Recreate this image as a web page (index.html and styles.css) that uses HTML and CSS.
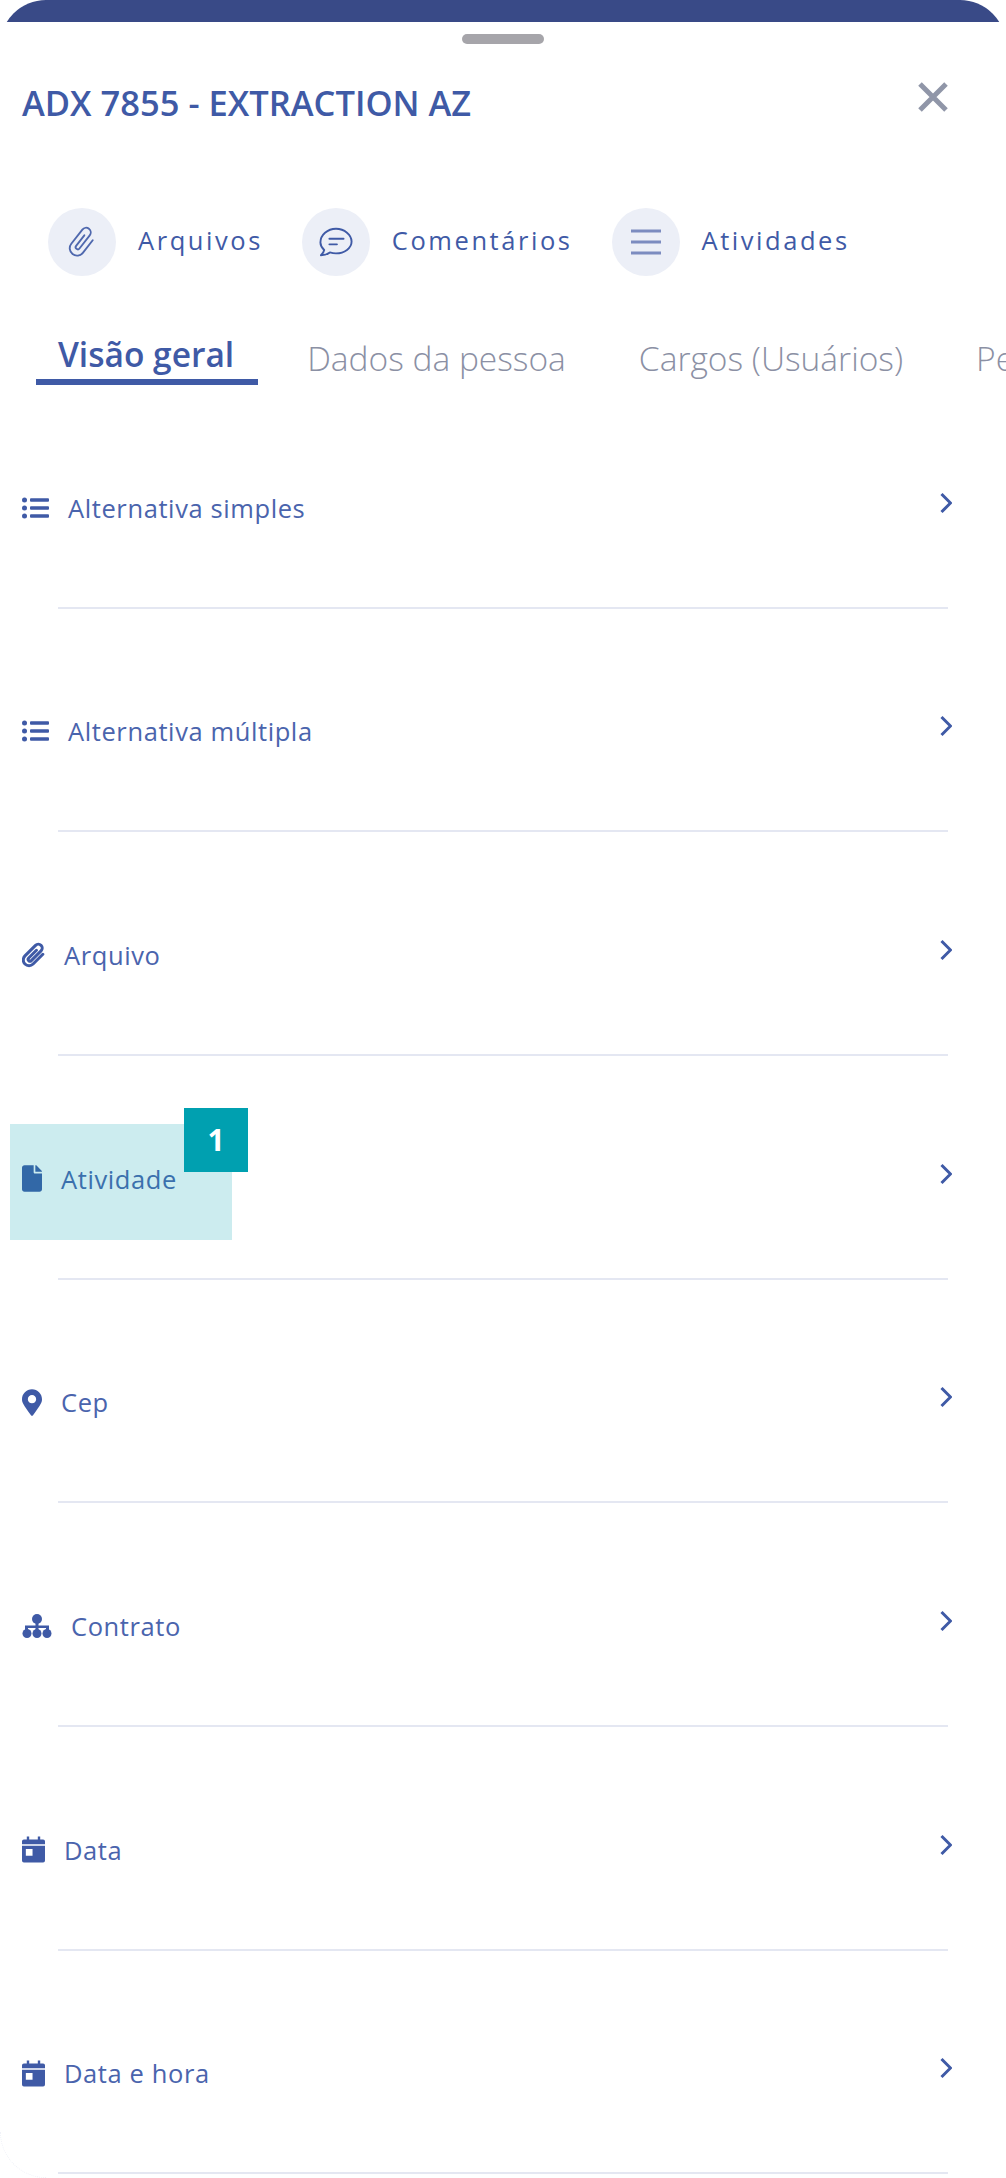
FILE: index.html
```html
<!DOCTYPE html>
<html lang="pt-BR">
<head>
    <meta charset="UTF-8">
    <meta name="viewport" content="width=device-width, initial-scale=1.0">
    <title>ADX 7855 - EXTRACTION AZ</title>
    <link rel="stylesheet" href="styles.css">
</head>
<body>
    <div class="top-band"></div>

    <div class="sheet">
        <div class="handle"></div>

        <div class="sheet-header">
            <h1>ADX 7855 - EXTRACTION AZ</h1>
            <svg class="close-icon" viewBox="0 0 30 30"><path d="M2 2l26 26M28 2L2 28"/></svg>
        </div>

        <div class="actions">
            <div class="action">
                <span class="action-circle">
                    <svg class="action-icon action-icon-clip" viewBox="0 0 24 24"><path transform="rotate(38 12 12)" d="M17.500 6v12a5.500 5.500 0 0 1-11 0V4.500a3.500 3.500 0 0 1 7 0v12.500a1.600 1.600 0 0 1-3.200 0V7"/></svg>
                </span>
                <span class="action-label">Arquivos</span>
            </div>
            <div class="action">
                <span class="action-circle">
                    <svg class="action-icon" viewBox="0 0 36 32"><path d="M2 30c2-1.500 3-3 3.500-5.500C3 22 1.500 19.500 1.500 16.500 1.500 8.500 9 2 18 2s16.500 6.500 16.500 13.500S27 28 18 28c-2.500 0-4.500-.4-6.500-1-2.500 2-5.500 3-9.500 3z"/><path d="M11 12.500h15M11 18.500h8"/></svg>
                </span>
                <span class="action-label">Comentários</span>
            </div>
            <div class="action">
                <span class="action-circle">
                    <svg class="action-icon action-icon-menu" viewBox="0 0 30 26"><path d="M0 2h30M0 13h30M0 24h30"/></svg>
                </span>
                <span class="action-label">Atividades</span>
            </div>
        </div>

        <div class="tabs">
            <div class="tab tab-active">Visão geral</div>
            <div class="tab">Dados da pessoa</div>
            <div class="tab">Cargos (Usuários)</div>
            <div class="tab">Pessoas</div>
        </div>

        <div class="field-list">
            <div class="field">
                <svg class="field-icon icon-list" viewBox="0 0 27 22"><circle cx="2.500" cy="3" r="2.500"/><circle cx="2.500" cy="11" r="2.500"/><circle cx="2.500" cy="19" r="2.500"/><rect x="8" y="1.300" width="19" height="3.400" rx="1"/><rect x="8" y="9.300" width="19" height="3.400" rx="1"/><rect x="8" y="17.300" width="19" height="3.400" rx="1"/></svg>
                <span class="field-label">Alternativa simples</span>
                <svg class="chevron" viewBox="0 0 12 22"><path d="M1.500 2l9 9-9 9"/></svg>
            </div>
            <div class="field">
                <svg class="field-icon icon-list" viewBox="0 0 27 22"><circle cx="2.500" cy="3" r="2.500"/><circle cx="2.500" cy="11" r="2.500"/><circle cx="2.500" cy="19" r="2.500"/><rect x="8" y="1.300" width="19" height="3.400" rx="1"/><rect x="8" y="9.300" width="19" height="3.400" rx="1"/><rect x="8" y="17.300" width="19" height="3.400" rx="1"/></svg>
                <span class="field-label">Alternativa múltipla</span>
                <svg class="chevron" viewBox="0 0 12 22"><path d="M1.500 2l9 9-9 9"/></svg>
            </div>
            <div class="field">
                <svg class="field-icon icon-clip" viewBox="2 2 20 20"><path transform="rotate(45 12 12)" d="M17 5.500v12a5 5 0 0 1-10 0V4.500a3.400 3.400 0 0 1 6.800 0v12a1.600 1.600 0 0 1-3.200 0V7"/></svg>
                <span class="field-label">Arquivo</span>
                <svg class="chevron" viewBox="0 0 12 22"><path d="M1.500 2l9 9-9 9"/></svg>
            </div>
            <div class="field">
                <svg class="field-icon icon-file" viewBox="0 0 384 512"><path d="M224 136V0H48C21.500 0 0 21.500 0 48v416c0 26.500 21.500 48 48 48h288c26.500 0 48-21.500 48-48V160H248c-13.200 0-24-10.800-24-24zm160-14.100v6.100H256V0h6.100c6.400 0 12.500 2.500 17 7l97.900 98c4.500 4.500 7 10.600 7 16.900z"/></svg>
                <span class="field-label">Atividade</span>
                <svg class="chevron" viewBox="0 0 12 22"><path d="M1.500 2l9 9-9 9"/></svg>
                <div class="highlight"></div>
                <div class="badge">1</div>
            </div>
            <div class="field">
                <svg class="field-icon icon-marker" viewBox="0 0 384 512"><path d="M172.268 501.670C26.970 291.031 0 262.429 0 192 0 85.961 85.961 0 192 0s192 85.961 192 192c0 70.429-26.970 99.031-172.268 309.670-9.535 13.774-29.930 13.773-39.464 0zM192 272c44.183 0 80-35.817 80-80s-35.817-80-80-80-80 35.817-80 80 35.817 80 80 80z"/></svg>
                <span class="field-label">Cep</span>
                <svg class="chevron" viewBox="0 0 12 22"><path d="M1.500 2l9 9-9 9"/></svg>
            </div>
            <div class="field">
                <svg class="field-icon icon-sitemap" viewBox="0 0 30 24"><circle cx="15" cy="5" r="5"/><circle cx="5" cy="19.500" r="4.500"/><circle cx="15" cy="19.500" r="4.500"/><circle cx="25" cy="19.500" r="4.500"/><path d="M13.500 8h3v3.500H27v6h-3v-3.500H16.500v3.500h-3V14H6v3.500H3v-6h10.500z"/></svg>
                <span class="field-label">Contrato</span>
                <svg class="chevron" viewBox="0 0 12 22"><path d="M1.500 2l9 9-9 9"/></svg>
            </div>
            <div class="field">
                <svg class="field-icon icon-calendar" viewBox="0 0 24 27"><path fill-rule="evenodd" d="M5 0h2.500v3h9V0H19v3h3a2 2 0 0 1 2 2v3H0V5a2 2 0 0 1 2-2h3zM0 9.500h24V25a2 2 0 0 1-2 2H2a2 2 0 0 1-2-2zM4 13v7h7v-7z"/></svg>
                <span class="field-label">Data</span>
                <svg class="chevron" viewBox="0 0 12 22"><path d="M1.500 2l9 9-9 9"/></svg>
            </div>
            <div class="field">
                <svg class="field-icon icon-calendar" viewBox="0 0 24 27"><path fill-rule="evenodd" d="M5 0h2.500v3h9V0H19v3h3a2 2 0 0 1 2 2v3H0V5a2 2 0 0 1 2-2h3zM0 9.500h24V25a2 2 0 0 1-2 2H2a2 2 0 0 1-2-2zM4 13v7h7v-7z"/></svg>
                <span class="field-label">Data e hora</span>
                <svg class="chevron" viewBox="0 0 12 22"><path d="M1.500 2l9 9-9 9"/></svg>
            </div>
        </div>
    </div>
</body>
</html>
```

FILE: styles.css
```css
html, body {
    margin: 0;
    padding: 0;
    height: 2178px;
    overflow: hidden;
    background-color: #fff;
}

body {
    font-family: 'Open Sans', sans-serif;
    color: #3f5aa6;
}

.top-band {
    height: 22px;
    overflow: hidden;
}

.top-band::before {
    content: "";
    display: block;
    height: 92px;
    background-color: #394a87;
    border-radius: 46px 46px 0 0;
}

.sheet {
    position: relative;
    height: 2156px;
    background-color: #fff;
}

/* canto arredondado bem fraco que aparece embaixo */
.sheet::after {
    content: "";
    position: absolute;
    left: 0;
    bottom: 0;
    width: 46px;
    height: 46px;
    box-sizing: border-box;
    border-left: 1px dotted #f0f2f8;
    border-bottom: 1px dotted #f0f2f8;
    border-bottom-left-radius: 46px;
}

.handle {
    width: 82px;
    height: 10px;
    margin: 0 auto;
    position: relative;
    top: 12px;
    background-color: #a6a5aa;
    border-radius: 5px;
}

.sheet-header {
    display: flex;
    justify-content: space-between;
    align-items: flex-start;
    padding: 50px 58px 0 22px;
}

h1 {
    margin: 0;
    font-size: 34.5px;
    font-weight: 600;
    line-height: 41px;
    color: #3f5aa6;
}

.close-icon {
    width: 30px;
    height: 30px;
    fill: none;
    stroke: #9096a8;
    stroke-width: 5;
}

.actions {
    display: flex;
    align-items: center;
    margin-top: 85px;
    padding-left: 48px;
}

.action {
    display: flex;
    align-items: center;
    gap: 22px;
    margin-right: 39px;
}

.action-circle {
    display: flex;
    align-items: center;
    justify-content: center;
    width: 68px;
    height: 68px;
    border-radius: 50%;
    background-color: #eceff7;
}

.action-icon {
    width: 34px;
    height: 32px;
    fill: none;
    stroke: #3f5aa6;
    stroke-width: 2;
    stroke-linecap: round;
    stroke-linejoin: round;
}

.action-icon-clip {
    stroke: #4f68ae;
    stroke-width: 1.400;
}

.action-icon-menu {
    width: 30px;
    height: 26px;
    stroke: #7c8cc0;
    stroke-width: 3;
    stroke-linecap: butt;
}

.action-label {
    margin-bottom: 4px;
    font-size: 25.5px;
    letter-spacing: 2.55px;
    color: #3f5aa6;
}

.tabs {
    display: flex;
    align-items: flex-end;
    gap: 29px;
    margin-top: 55px;
    margin-left: 36px;
    white-space: nowrap;
}

.tab {
    padding: 0 22px 4px;
    font-size: 33.5px;
    font-weight: 300;
    line-height: 46px;
    color: #8b90a4;
}

.tab-active {
    padding-right: 24px;
    padding-bottom: 2px;
    margin-right: -2px;
    font-weight: 600;
    color: #3f5aa6;
    border-bottom: 6px solid #3f5aa6;
}

.field {
    position: relative;
    display: flex;
    align-items: center;
    gap: 19px;
    height: 223.67px;
    box-sizing: border-box;
    padding: 22px 54px 0 22px;
}

.field::after {
    content: "";
    position: absolute;
    left: 58px;
    right: 58px;
    bottom: 0;
    height: 2px;
    background-color: #e4e7f2;
}

.field-icon {
    flex: none;
    fill: #3f5aa6;
}

.icon-list {
    width: 27px;
    height: 22px;
}

.icon-clip {
    width: 23px;
    height: 27px;
    fill: none;
    stroke: #3f5aa6;
    stroke-width: 2.600;
    stroke-linecap: round;
}

.icon-file {
    width: 20px;
    height: 27px;
}

.icon-marker {
    width: 20px;
    height: 27px;
}

.icon-sitemap {
    width: 30px;
    height: 24px;
}

.icon-calendar {
    width: 23px;
    height: 27px;
}

.field-label {
    flex: 1;
    font-size: 25.5px;
    line-height: 34px;
    letter-spacing: 0.6px;
    color: #4a64ad;
}

.chevron {
    flex: none;
    width: 12px;
    height: 22px;
    margin-top: -10px;
    fill: none;
    stroke: #3f5aa6;
    stroke-width: 3;
}

/* marcacao do tutorial por cima da linha */
.highlight {
    position: absolute;
    left: 10px;
    top: 68px;
    width: 222px;
    height: 116px;
    background-color: rgba(0, 160, 176, 0.2);
}

.badge {
    position: absolute;
    left: 184px;
    top: 52px;
    width: 64px;
    height: 64px;
    display: flex;
    align-items: center;
    justify-content: center;
    background-color: #00a0b0;
    color: #fff;
    font-size: 30px;
    font-weight: 700;
}
```
